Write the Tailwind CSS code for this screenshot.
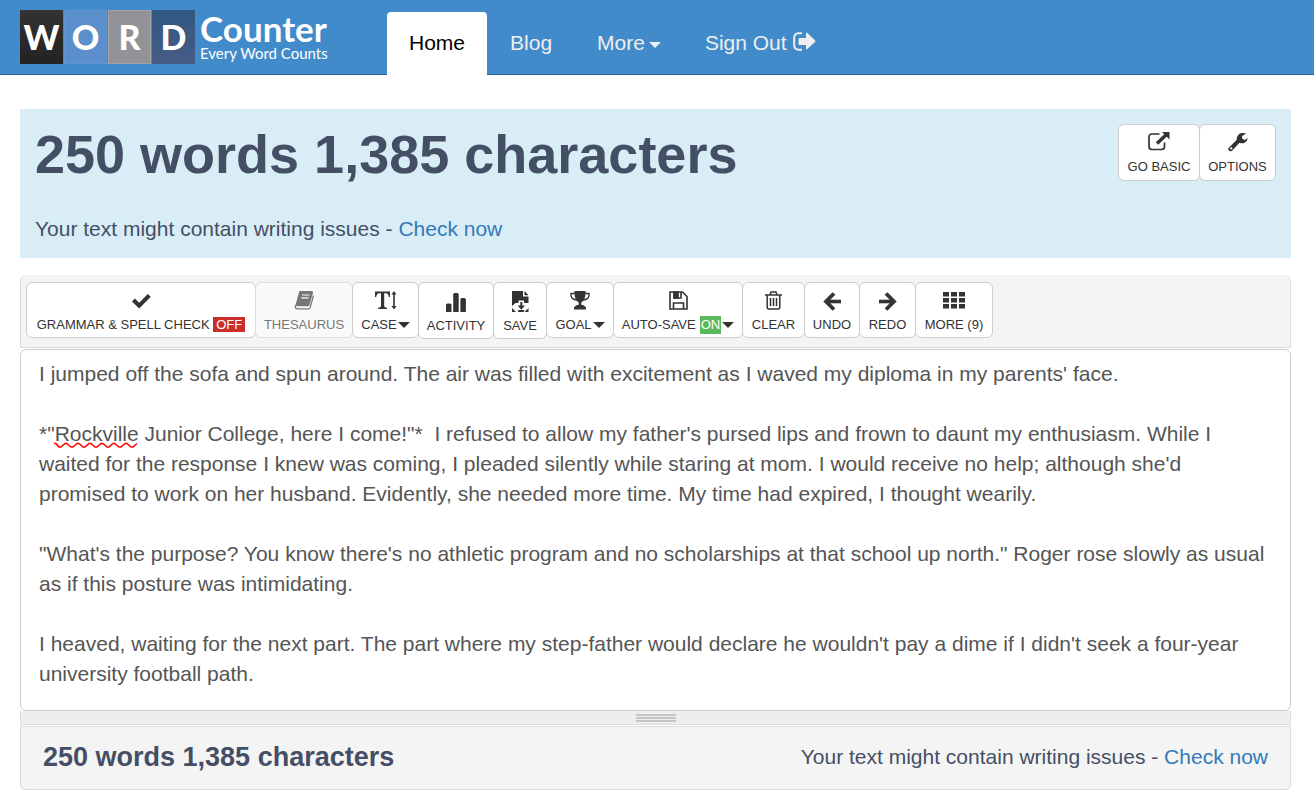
<!DOCTYPE html>
<html lang="en">

<head>
  <meta charset="UTF-8">
  <meta name="viewport" content="width=device-width, initial-scale=1.0">
  <title>WordCounter - Every Word Counts</title>
  <script src="https://cdn.jsdelivr.net/npm/@tailwindcss/browser@4"></script>
</head>

<body class="bg-white font-['Liberation_Sans',Arial,sans-serif] text-[21px] leading-[30px] text-[#444f66]">

  <!-- Top navigation -->
  <header class="flex h-[75px] items-end border-b border-[#2b669a] bg-[#428bca] pl-5">
    <a href="#" aria-label="WordCounter home" class="mb-[10px] flex h-[54px] w-[367px] items-stretch text-white">
      <span class="flex gap-px font-['Lato',sans-serif] text-[34px] font-black">
        <span class="flex w-[43px] items-center justify-center bg-linear-to-b from-[#343434] to-[#222]">W</span>
        <span class="flex w-[43px] items-center justify-center border border-[#5f96d0] bg-[#5a8fcb]">O</span>
        <span class="flex w-[43px] items-center justify-center border border-[#a3a3a5] bg-[#929397]">R</span>
        <span class="flex w-[43px] items-center justify-center bg-linear-to-b from-[#2f5781] to-[#475d86]">D</span>
      </span>
      <span class="flex flex-col pl-[5px] font-['Lato',sans-serif]">
        <span class="text-[35px] leading-[36px] font-bold">Counter</span>
        <span class="text-[15px] leading-[14px]">Every Word Counts</span>
      </span>
    </a>
    <nav class="-mb-px flex h-[63px] text-[#eee]">
      <a href="#" class="rounded-t bg-white px-[22px] pt-4 text-black">Home</a>
      <a href="#" class="px-[23px] pt-4">Blog</a>
      <a href="#" class="flex items-start gap-1 px-[22px] pt-4">More
        <svg class="mt-[14px] h-[6px] w-3" viewBox="0 0 12 6" fill="currentColor"><path d="M0 0h12L6 6z"/></svg>
      </a>
      <a href="#" class="flex items-start gap-1.5 px-[22px] pt-4">Sign Out
        <svg class="mt-[4px] h-[19px] w-[23px]" viewBox="0 0 23 19" fill="currentColor"><path d="M9 1.2H5.500A4.200 4.200 0 0 0 1.200 5.500v8a4.200 4.200 0 0 0 4.300 4.200H9" fill="none" stroke="currentColor" stroke-width="2"/><path d="M6.500 6H13V1.200q0-1.200 1-.4l8 7.500q.8.900 0 1.700l-8 7.300q-1 .800-1-.4V13H6.500q-1 0-1-1V7q0-1 1-1z"/></svg>
      </a>
    </nav>
  </header>

  <main class="mt-[34px] mr-[23px] ml-5">

    <!-- Counter summary -->
    <section class="flex h-[149px] items-start justify-between bg-[#d9edf7] px-[15px] pt-[15px]">
      <div>
        <h1 class="text-[54px] leading-[60px] font-bold">250 words 1,385 characters</h1>
        <p class="mt-[30px]">Your text might contain writing issues - <a href="#" class="text-[#337ab7]">Check now</a></p>
      </div>
      <div class="flex text-[13px] leading-[18px] text-[#333]">
        <button type="button" class="flex h-[57px] w-[82px] flex-col items-center rounded-md border border-[#ccc] bg-white pt-[7px]">
          <svg class="mb-1.5 h-5 w-[22px]" viewBox="0 0 22 20" fill="none" stroke="currentColor" stroke-width="1.700"><path d="M11.500 2H4Q1 2 1 5v9.500q0 3 3 3h9.500q3 0 3-3v-4"/><path d="M9 11.500L18 3" stroke-width="3.400"/><path d="M14 0h7.500v7.500z" fill="currentColor" stroke="none"/></svg>
          <span>GO BASIC</span>
        </button>
        <button type="button" class="-ml-px flex h-[57px] w-[77px] flex-col items-center rounded-md border border-[#ccc] bg-white pt-[7px]">
          <svg class="mb-1.5 h-5 w-5" viewBox="0 0 20 20" fill="currentColor"><path fill-rule="evenodd" d="M.800 15.800l8-8A5.800 5.800 0 0 1 14.300 1q2-.3 3.800.6l-4 2.400v2.500L16.700 8l3-2a5.800 5.800 0 0 1-8.200 4.800l-7.400 7.900q-1.500 1.200-2.800 0l-.7-.700q-.9-1.200.2-2.200zM3.200 15.300a1.100 1.100 0 1 0 .1 2.200a1.100 1.100 0 0 0-.1-2.200z"/></svg>
          <span>OPTIONS</span>
        </button>
      </div>
    </section>

    <!-- Toolbar -->
    <div class="mt-[17px] flex h-[73px] rounded-t-md border border-t-0 border-[#ddd] bg-[#f4f4f4] pt-[7px] pl-[5px] text-[13px] leading-[18px] text-[#333]">
      <button type="button" class="flex h-14 w-[230px] shrink-0 flex-col items-center rounded-md border border-[#ccc] bg-white">
        <svg class="mt-[11px] mb-[7px] h-[15px] w-[19px]" viewBox="0 0 19 15" fill="currentColor"><path d="M0 7.500L2.900 4.500L7.200 8.700L15.800 0L18.800 2.800L7.200 14.500z"/></svg>
        <span>GRAMMAR &amp; SPELL CHECK <span class="bg-[#c9302c] px-[3px] text-white">OFF</span></span>
      </button>
      <button type="button" disabled class="-ml-px flex h-14 w-[98px] shrink-0 flex-col items-center rounded-md border border-[#ddd] bg-[#fafafa] text-[#777]">
        <svg class="mt-2 mb-1.5 h-[19px] w-5" viewBox="0 0 20 19"><path d="M6 0h12q1.300.300 1 1.800L15.500 14q-.400 1.200-1.700 1.200H3q-1.500 0-1.300-1.700L5 1q.2-1 1-1z" fill="currentColor"/><path d="M8 4h7.500M7.200 6.800h7.500" stroke="#fafafa" stroke-width="1.200"/><path d="M1.600 14q-.900 3.800 1.800 3.800H14.500q1.300 0 1.700-1.400L19.500 4.500" fill="none" stroke="currentColor" stroke-width="1.300"/></svg>
        <span>THESAURUS</span>
      </button>
      <button type="button" class="-ml-px flex h-14 w-[67px] shrink-0 flex-col items-center rounded-md border border-[#ccc] bg-white">
        <svg class="mt-2 mb-1.5 h-[19px] w-[22px]" viewBox="0 0 22 19" fill="currentColor"><path d="M0 .5h15V6h-1.200Q13.400 2.300 11 2.300H9.200V15q0 1.700 2.800 1.800V18H3.200v-1.200Q6 16.700 6 15V2.300H4.200Q1.700 2.300 1.200 6H0z"/><path d="M19 0l2.500 3.500h-1.700v11.500h1.700L19 18.500L16.500 15h1.700V3.500h-1.700z"/></svg>
        <span class="flex items-center">CASE<svg class="ml-px h-[6px] w-3" viewBox="0 0 12 6" fill="currentColor"><path d="M0 0h12L6 6z"/></svg></span>
      </button>
      <button type="button" class="-ml-px flex h-[57px] w-[76px] shrink-0 flex-col items-center rounded-md border border-[#ccc] bg-white">
        <svg class="mt-[10px] mb-[5px] h-[19px] w-5" viewBox="0 0 20 19" fill="currentColor"><path d="M0 19v-7q0-1.500 1.500-1.500h2.500q1.500 0 1.500 1.500v7zM7.200 19V1.500Q7.200 0 8.700 0h2.500q1.500 0 1.500 1.500V19zM14.400 19V6.500q0-1.500 1.500-1.500h2.500q1.500 0 1.500 1.500V19z"/></svg>
        <span>ACTIVITY</span>
      </button>
      <button type="button" class="-ml-px flex h-[57px] w-[54px] shrink-0 flex-col items-center rounded-md border border-[#ccc] bg-white">
        <svg class="mt-2 mb-[5px] h-[21px] w-[17px]" viewBox="0 0 17 21" fill="currentColor"><path d="M0 0h11v5.500h5.500V12H12V9.500H6.500V12H3.500L0 15z"/><path d="M12.500 0L16.500 4.200h-4zM0 17l4 4H0zM16.500 17v4h-4zM8.300 11h2v3.500H13L9.300 18.800L5.600 14.500h2.700zM5.500 20l1-1h6l-1 2h-5z"/></svg>
        <span>SAVE</span>
      </button>
      <button type="button" class="-ml-px flex h-14 w-[68px] shrink-0 flex-col items-center rounded-md border border-[#ccc] bg-white">
        <svg class="mt-2 mb-1.5 h-[19px] w-5" viewBox="0 0 20 19" fill="currentColor"><path d="M4.500 0h11v2q0 7-4.200 9.500v2.300q3.400.2 3.700 2.200h1v2.500H4V16h1q.3-2 3.700-2.200v-2.300Q4.500 9 4.500 2z"/><path d="M5 2.500H1V4q0 4.500 6 5M15 2.500h4V4q0 4.500-6 5" fill="none" stroke="currentColor" stroke-width="1.400"/></svg>
        <span class="flex items-center">GOAL<svg class="ml-px h-[6px] w-3" viewBox="0 0 12 6" fill="currentColor"><path d="M0 0h12L6 6z"/></svg></span>
      </button>
      <button type="button" class="-ml-px flex h-14 w-[130px] shrink-0 flex-col items-center rounded-md border border-[#ccc] bg-white">
        <svg class="mt-2 mb-1.5 h-[19px] w-[19px]" viewBox="0 0 19 19" fill="none" stroke="currentColor" stroke-width="1.600"><path d="M1 1h12.500l4.500 4.500V18H1zM4.500 18v-6h10v6M5 1v6h7V1"/><path d="M5 1h4v6H5z" fill="currentColor"/></svg>
        <span class="flex items-center">AUTO-SAVE<span class="ml-1 bg-[#5cb85c] px-px text-white">ON</span><svg class="ml-px h-[6px] w-3" viewBox="0 0 12 6" fill="currentColor"><path d="M0 0h12L6 6z"/></svg></span>
      </button>
      <button type="button" class="-ml-px flex h-14 w-[63px] shrink-0 flex-col items-center rounded-md border border-[#ccc] bg-white">
        <svg class="mt-2 mb-1.5 h-[19px] w-[17px]" viewBox="0 0 17 19" fill="none" stroke="currentColor" stroke-width="1.500"><path d="M0 4h17M5 4L6 1h5l1 3M2.200 4v12.500q0 1.500 1.500 1.500h9.600q1.500 0 1.500-1.500V4M5.500 7v8M8.500 7v8M11.500 7v8"/></svg>
        <span>CLEAR</span>
      </button>
      <button type="button" class="-ml-px flex h-14 w-14 shrink-0 flex-col items-center rounded-md border border-[#ccc] bg-white">
        <svg class="mt-[9px] mb-[5px] h-[19px] w-[18px]" viewBox="0 0 18 19" fill="none" stroke="currentColor"><path d="M18 9.500H3" stroke-width="3.600"/><path d="M11 1.500L3 9.500l8 8" stroke-width="3.800"/></svg>
        <span>UNDO</span>
      </button>
      <button type="button" class="-ml-px flex h-14 w-[57px] shrink-0 flex-col items-center rounded-md border border-[#ccc] bg-white">
        <svg class="mt-[9px] mb-[5px] h-[19px] w-[18px]" viewBox="0 0 18 19" fill="none" stroke="currentColor"><path d="M0 9.500h15" stroke-width="3.600"/><path d="M7 1.500l8 8-8 8" stroke-width="3.800"/></svg>
        <span>REDO</span>
      </button>
      <button type="button" class="-ml-px flex h-14 w-[78px] shrink-0 flex-col items-center rounded-md border border-[#ccc] bg-white">
        <svg class="mt-2 mb-[7px] h-[18px] w-[22px]" viewBox="0 0 22 18" fill="currentColor"><path d="M0 1h6v4.500H0zM8 1h6v4.500H8zM16 1h6v4.500h-6zM0 7h6v4.500H0zM8 7h6v4.500H8zM16 7h6v4.500h-6zM0 13h6v4.500H0zM8 13h6v4.500H8zM16 13h6v4.500h-6z"/></svg>
        <span>MORE (9)</span>
      </button>
    </div>

    <!-- Editor -->
    <div class="relative mt-px h-[362px] text-[#555]">
      <textarea aria-label="Your text" spellcheck="false" class="block h-full w-full resize-none overflow-hidden rounded-md border border-[#ccc] bg-white py-[9px] pr-[22px] pl-[18px] outline-none">I jumped off the sofa and spun around. The air was filled with excitement as I waved my diploma in my parents' face.

*"Rockville Junior College, here I come!"*  I refused to allow my father's pursed lips and frown to daunt my enthusiasm. While I waited for the response I knew was coming, I pleaded silently while staring at mom. I would receive no help; although she'd promised to work on her husband. Evidently, she needed more time. My time had expired, I thought wearily.

"What's the purpose? You know there's no athletic program and no scholarships at that school up north." Roger rose slowly as usual as if this posture was intimidating.

I heaved, waiting for the next part. The part where my step-father would declare he wouldn't pay a dime if I didn't seek a four-year university football path.</textarea>
      <!-- Spelling mark -->
      <svg class="pointer-events-none absolute top-[93px] left-[34px] h-[7px] w-[84px]" viewBox="0 0 84 7" fill="none" stroke="#f00" stroke-width="1.600"><path d="M0 1.500L2 1.500L5 5H7L11 1.500H13L17 5H19L23 1.500H25L29 5H31L35 1.500H37L41 5H43L47 1.500H49L53 5H55L59 1.500H61L65 5H67L71 1.500H73L77 5H79L83 1.500"/></svg>
    </div>

    <!-- Resize grip -->
    <div class="flex h-[14px] items-center justify-center border border-t-0 border-[#ddd] bg-[#eee]">
      <svg class="h-2 w-10" viewBox="0 0 40 8" fill="#c4c4c4"><path d="M0 0h40v2H0zM0 3h40v2H0zM0 6h40v2H0z"/></svg>
    </div>

    <footer class="mt-px flex h-[64px] items-center justify-between rounded-b-md border border-[#ddd] bg-[#f4f4f4] px-[22px] pb-0.5 shadow-xs">
      <h2 class="text-[27px] font-bold">250 words 1,385 characters</h2>
      <p>Your text might contain writing issues - <a href="#" class="text-[#337ab7]">Check now</a></p>
    </footer>
  </main>

</body>

</html>
